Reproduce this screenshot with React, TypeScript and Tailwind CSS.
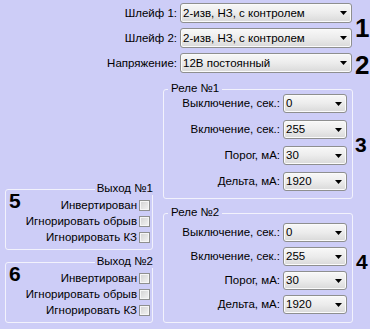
const BG = "bg-[#cdcdf7]";

function Combo({ value, w, h }: { value: string; w: string; h: string }) {
  return (
    <div
      className={`flex items-center justify-between rounded-[3px] border border-[#8e8f8f] bg-linear-to-b from-[#f8f8f8] via-[#ececec] to-[#d9d9d9] pl-[2px] pr-[4px] shadow-[inset_0_0_0_1px_#fbfbfb] ${w} ${h}`}
    >
      <span className="whitespace-nowrap">{value}</span>
      <svg width="7" height="4" viewBox="0 0 7 4">
        <path d="M0 0h7L3.5 4z" fill="#000" />
      </svg>
    </div>
  );
}

function Check({ label }: { label: string }) {
  return (
    <div className="flex h-[16px] items-center justify-end gap-[2px]">
      <span className="whitespace-nowrap">{label}</span>
      <span className="h-[11px] w-[11px] border border-[#8e8f8f] bg-linear-to-br from-[#d2d2d2] to-[#f4f4f4] shadow-[inset_0_0_0_1px_#f6f6f6]" />
    </div>
  );
}

function RelayRow({ label, value }: { label: string; value: string }) {
  return (
    <div className="flex items-center gap-[3px]">
      <span className="whitespace-nowrap">{label}</span>
      <Combo value={value} w="w-[64px]" h="h-[19px]" />
    </div>
  );
}

function Relay({ title, pt, gap }: { title: string; pt: string; gap: string }) {
  return (
    <div
      className={`relative flex h-[110px] w-[190px] flex-col items-end rounded-[3px] border border-[#f2f2fc] pr-[5px] ${pt} ${gap}`}
    >
      <span className={`absolute -top-[8px] left-[4px] px-[3px] ${BG}`}>{title}</span>
      <RelayRow label="Выключение, сек.:" value="0" />
      <RelayRow label="Включение, сек.:" value="255" />
      <RelayRow label="Порог, мА:" value="30" />
      <RelayRow label="Дельта, мА:" value="1920" />
    </div>
  );
}

function Output({ title, num }: { title: string; num: string }) {
  return (
    <div className="relative flex h-[61px] w-[148px] rounded-[3px] border border-[#f2f2fc]">
      <span className={`absolute -top-[8px] -right-[1px] pl-[2px] ${BG}`}>{title}</span>
      <span className="pl-[3px] text-[21px] font-bold leading-none">{num}</span>
      <div className="ml-auto flex flex-col pr-[2px] pt-[7px]">
        <Check label="Инвертирован" />
        <Check label="Игнорировать обрыв" />
        <Check label="Игнорировать КЗ" />
      </div>
    </div>
  );
}

export default function App() {
  return (
    <div
      className={`h-[329px] w-[370px] overflow-hidden ${BG} font-['Liberation_Sans',Arial,sans-serif] text-[11.5px] leading-[13px] text-black`}
    >
      <div className="grid grid-cols-[180px_172px_18px] grid-rows-[20px_20px_20px] gap-y-[5px] pt-[3px]">
        <span className="self-center pr-[3px] text-right">Шлейф 1:</span>
        <Combo value="2-изв, НЗ, с контролем" w="w-[172px]" h="h-[20px]" />
        <span className="row-span-2 mt-[4px] self-center pl-[3px] text-[26px] font-bold leading-none">1</span>
        <span className="self-center pr-[3px] text-right">Шлейф 2:</span>
        <Combo value="2-изв, НЗ, с контролем" w="w-[172px]" h="h-[20px]" />
        <span className="self-center pr-[3px] text-right">Напряжение:</span>
        <Combo value="12В постоянный" w="w-[172px]" h="h-[20px]" />
        <span className="mt-[3px] self-center pl-[3px] text-[26px] font-bold leading-none">2</span>
      </div>

      <div className="mt-[16px] flex">
        <div className="flex w-[163px] flex-col gap-[12px] pl-[5px] pt-[100px]">
          <Output title="Выход №1" num="5" />
          <Output title="Выход №2" num="6" />
        </div>
        <div className="flex flex-col gap-[14px]">
          <div className="flex items-center">
            <Relay title="Реле №1" pt="pt-[4px]" gap="gap-[7px]" />
            <span className="pl-[2px] text-[21px] font-bold leading-none">3</span>
          </div>
          <div className="flex items-center">
            <Relay title="Реле №2" pt="pt-[9px]" gap="gap-[5px]" />
            <span className="mb-[13px] pl-[3px] text-[21px] font-bold leading-none">4</span>
          </div>
        </div>
      </div>
    </div>
  );
}
